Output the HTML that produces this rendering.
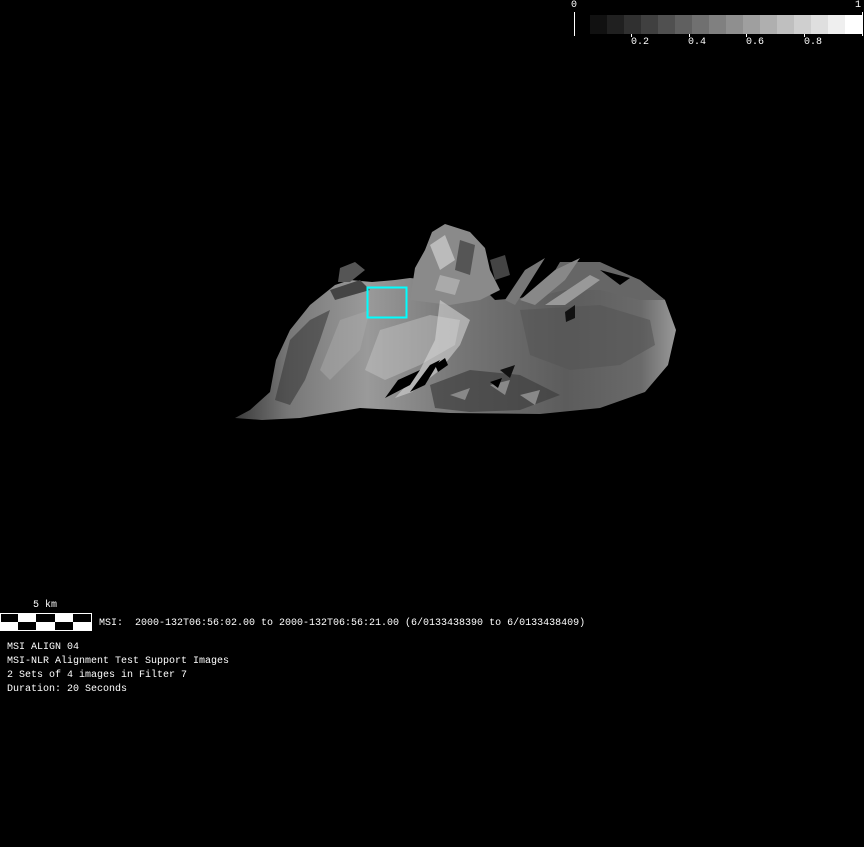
<!DOCTYPE html>
<html><head><meta charset="utf-8"><style>
html,body{margin:0;padding:0;background:#000;}
body{width:864px;height:847px;position:relative;overflow:hidden;font-family:"Liberation Mono",monospace;font-size:10px;color:#fff;}
.t{position:absolute;white-space:pre;line-height:12px;}
</style></head><body>
<svg width="864" height="847" style="position:absolute;left:0;top:0">
<defs>
<linearGradient id="g" x1="0" y1="0" x2="1" y2="0">
<stop offset="0" stop-color="#3a3a3a"/><stop offset="0.12" stop-color="#777"/><stop offset="0.3" stop-color="#9a9a9a"/><stop offset="0.5" stop-color="#777"/><stop offset="0.75" stop-color="#5c5c5c"/><stop offset="0.92" stop-color="#6a6a6a"/><stop offset="1" stop-color="#999"/>
</linearGradient>
</defs>
<g>
<rect x="590" y="15" width="17" height="19" fill="#111"/><rect x="607" y="15" width="17" height="19" fill="#202020"/><rect x="624" y="15" width="17" height="19" fill="#303030"/><rect x="641" y="15" width="17" height="19" fill="#404040"/><rect x="658" y="15" width="17" height="19" fill="#505050"/><rect x="675" y="15" width="17" height="19" fill="#606060"/><rect x="692" y="15" width="17" height="19" fill="#707070"/><rect x="709" y="15" width="17" height="19" fill="#808080"/><rect x="726" y="15" width="17" height="19" fill="#8f8f8f"/><rect x="743" y="15" width="17" height="19" fill="#9f9f9f"/><rect x="760" y="15" width="17" height="19" fill="#afafaf"/><rect x="777" y="15" width="17" height="19" fill="#bfbfbf"/><rect x="794" y="15" width="17" height="19" fill="#cfcfcf"/><rect x="811" y="15" width="17" height="19" fill="#dfdfdf"/><rect x="828" y="15" width="17" height="19" fill="#efefef"/><rect x="845" y="15" width="17" height="19" fill="#fff"/>
<rect x="574" y="12" width="1" height="24" fill="#fff"/>
<rect x="862" y="12" width="1" height="24" fill="#fff"/>
<rect x="631" y="34" width="1" height="3" fill="#fff"/><rect x="689" y="34" width="1" height="3" fill="#fff"/><rect x="746" y="34" width="1" height="3" fill="#fff"/><rect x="804" y="34" width="1" height="3" fill="#fff"/>
</g>
<!-- asteroid main body -->
<path d="M235,418 L262,420 L300,418 L360,408 L450,413 L540,414 L600,408 L645,392 L668,365 L676,330 L665,300 L640,280 L610,268 L580,280 L550,292 L520,298 L495,300 L480,285 L470,270 L450,285 L430,280 L410,278 L395,280 L372,282 L350,280 L335,285 L310,305 L290,330 L276,360 L270,392 L250,410 Z" fill="url(#g)"/>
<!-- right lobe top rim -->
<path d="M560,262 L600,262 L640,280 L665,300 L640,300 L600,290 L565,290 L540,296 Z" fill="#666"/>
<!-- spiky top region -->
<path d="M410,300 L415,268 L425,250 L432,232 L445,224 L470,232 L485,248 L490,270 L500,290 L480,300 L450,305 Z" fill="#8a8a8a"/>
<path d="M430,245 L445,235 L455,260 L440,270 Z" fill="#bbb"/>
<path d="M460,240 L475,245 L470,275 L455,270 Z" fill="#555"/>
<path d="M440,275 L460,280 L455,295 L435,290 Z" fill="#aaa"/>
<path d="M490,260 L505,255 L510,275 L495,280 Z" fill="#444"/>
<path d="M505,300 L525,270 L545,258 L525,290 L515,305 Z" fill="#777"/>
<path d="M520,300 L555,270 L580,258 L565,280 L535,305 Z" fill="#888"/>
<path d="M545,305 L590,275 L600,280 L565,305 Z" fill="#999"/>
<path d="M340,268 L355,262 L365,270 L350,282 L338,282 Z" fill="#555"/>
<path d="M330,290 L360,280 L370,290 L335,300 Z" fill="#444"/>
<!-- interior variation -->
<path d="M520,310 L600,305 L650,320 L655,345 L620,365 L570,370 L530,355 Z" fill="#555" opacity="0.6"/>
<path d="M380,330 L430,315 L460,320 L455,345 L420,365 L385,380 L365,370 Z" fill="#c8c8c8" opacity="0.45"/>
<path d="M440,300 L470,320 L460,345 L440,370 L412,392 L395,398 L420,370 L435,340 Z" fill="#ddd" opacity="0.55"/>
<path d="M430,385 L470,370 L520,375 L560,395 L520,410 L470,412 L435,408 Z" fill="#3e3e3e" opacity="0.7"/>
<path d="M450,395 L470,388 L465,400 Z" fill="#888"/><path d="M490,385 L510,380 L505,395 Z" fill="#888"/><path d="M520,395 L540,390 L535,405 Z" fill="#888"/>
<path d="M290,340 L310,320 L330,310 L320,340 L305,380 L290,405 L275,400 Z" fill="#333" opacity="0.55"/>
<path d="M340,320 L370,310 L360,350 L330,380 L320,370 Z" fill="#aaa" opacity="0.5"/>
<!-- black gaps -->
<path d="M398,380 L420,370 L410,385 L385,398 Z" fill="#000"/>
<path d="M430,365 L440,360 L425,385 L410,392 Z" fill="#000"/>
<path d="M435,365 L445,358 L448,365 L438,372 Z" fill="#000"/>
<path d="M490,382 L502,378 L498,388 Z" fill="#000"/>
<path d="M500,370 L515,365 L510,378 Z" fill="#111"/>
<path d="M565,312 L575,305 L575,318 L566,322 Z" fill="#111"/>
<path d="M600,270 L630,278 L620,285 Z" fill="#000"/>
<!-- cyan box -->
<rect x="367.5" y="287.5" width="39" height="30" fill="none" stroke="#0ff" stroke-width="2"/>
<!-- scale bar -->
<rect x="0" y="613" width="92" height="18" fill="#fff"/>
<rect x="1" y="614" width="17" height="8" fill="#000"/><rect x="36" y="614" width="19" height="8" fill="#000"/><rect x="73" y="614" width="18" height="8" fill="#000"/>
<rect x="18" y="622" width="18" height="8" fill="#000"/><rect x="55" y="622" width="18" height="8" fill="#000"/>
</svg>
<div class="t" style="left:571px;top:0px">0</div>
<div class="t" style="left:855px;top:0px">1</div>
<div class="t" style="left:631px;top:37px">0.2</div>
<div class="t" style="left:688px;top:37px">0.4</div>
<div class="t" style="left:746px;top:37px">0.6</div>
<div class="t" style="left:804px;top:37px">0.8</div>
<div class="t" style="left:33px;top:600px">5 km</div>
<div class="t" style="left:99px;top:618px">MSI:  2000-132T06:56:02.00 to 2000-132T06:56:21.00 (6/0133438390 to 6/0133438409)</div>
<div class="t" style="left:7px;top:641px;line-height:14px">MSI ALIGN 04
MSI-NLR Alignment Test Support Images
2 Sets of 4 images in Filter 7
Duration: 20 Seconds</div>
</body></html>
